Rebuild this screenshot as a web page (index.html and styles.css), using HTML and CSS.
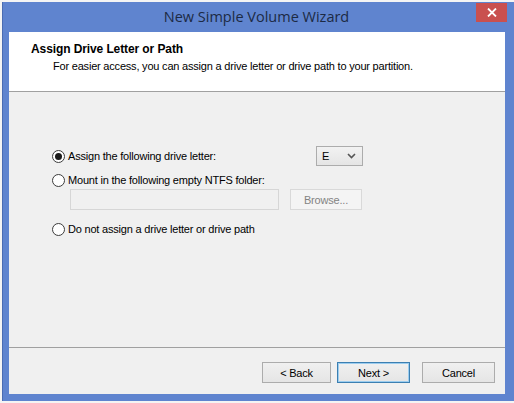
FILE: index.html
```html
<!DOCTYPE html>
<html lang="en">

<head>
    <meta charset="UTF-8">
    <title>New Simple Volume Wizard</title>
    <link rel="stylesheet" href="styles.css">
</head>

<body>
    <div class="desktop">
        <div class="window">
            <div class="titlebar">
                <span class="title">New Simple Volume Wizard</span>
                <button class="close" type="button">
                    <svg width="10" height="9" viewBox="0 0 10 9">
                        <path d="M1 0.5 L9 8.5 M9 0.5 L1 8.5" stroke="#fff" stroke-width="1.8" fill="none"/>
                    </svg>
                </button>
            </div>
            <div class="client">
                <div class="header">
                    <div class="head-title">Assign Drive Letter or Path</div>
                    <div class="head-sub">For easier access, you can assign a drive letter or drive path to your partition.</div>
                </div>
                <div class="content">
                    <div class="row row-first">
                        <label class="option">
                            <span class="radio checked"></span>
                            Assign the following drive letter:
                        </label>
                        <div class="select">
                            <span>E</span>
                            <svg width="9" height="6" viewBox="0 0 9 6">
                                <path d="M1 1 L4.5 4.5 L8 1" stroke="#555" stroke-width="1.6" fill="none"/>
                            </svg>
                        </div>
                    </div>
                    <div class="row">
                        <label class="option">
                            <span class="radio"></span>
                            Mount in the following empty NTFS folder:
                        </label>
                    </div>
                    <div class="folder">
                        <div class="textbox"></div>
                        <button class="btn disabled" type="button">Browse...</button>
                    </div>
                    <div class="row row-last">
                        <label class="option">
                            <span class="radio"></span>
                            Do not assign a drive letter or drive path
                        </label>
                    </div>
                </div>
                <div class="footer">
                    <button class="btn back" type="button">&lt; Back</button>
                    <button class="btn default" type="button">Next &gt;</button>
                    <button class="btn cancel" type="button">Cancel</button>
                </div>
            </div>
        </div>
    </div>
</body>

</html>
```

FILE: styles.css
```css
body {
    margin: 0;
    background: #f4f4f4;
    font-family: "Liberation Sans", Arial, sans-serif;
    font-size: 11px;
    letter-spacing: -0.2px;
    color: #000;
}

.desktop {
    width: 514px;
    height: 403px;
    padding: 2px 0 0 2px;
    box-sizing: border-box;
    overflow: hidden;
}

.window {
    width: 514px;
    height: 399px;
    background: #5f84cf;
    border-left: 1px solid #4a6cb3;
    box-sizing: border-box;
    display: flex;
    flex-direction: column;
}

.titlebar {
    height: 30px;
    position: relative;
    display: flex;
    align-items: center;
    justify-content: center;
}

.title {
    font-family: "Open Sans", "Noto Sans", sans-serif;
    font-size: 14.5px;
    letter-spacing: 0;
    color: #1c2a44;
    margin: -1px 6px 0 0;
}

.close {
    position: absolute;
    top: 1px;
    right: 9px;
    width: 31px;
    height: 19px;
    border: none;
    background: #c9504f;
    padding: 0;
    display: flex;
    align-items: center;
    justify-content: center;
}

.client {
    margin: 0 11px 7px 6px;
    flex: 1;
    background: #f0f0f0;
    display: flex;
    flex-direction: column;
}

.header {
    height: 59px;
    background: #fff;
    border-bottom: 1px solid #a0a0a0;
    box-sizing: content-box;
    padding-left: 22px;
}

.head-title {
    font-weight: bold;
    font-size: 12px;
    letter-spacing: -0.1px;
    margin-top: 10px;
}

.head-sub {
    margin-top: 4px;
    padding-left: 22px;
}

.content {
    flex: 1;
    padding: 54px 0 0 43px;
    border-bottom: 1px solid #a0a0a0;
}

.row {
    display: flex;
    align-items: center;
    height: 16px;
}

.row-first {
    height: 20px;
    margin-bottom: 6px;
}

.row-last {
    margin-top: 11px;
}

.option {
    display: flex;
    align-items: center;
    gap: 3px;
    width: 264px;
}

.radio {
    width: 13px;
    height: 13px;
    box-sizing: border-box;
    border: 1px solid #3c3c3c;
    border-radius: 50%;
    background: #fff;
    position: relative;
}

.radio.checked::after {
    content: "";
    position: absolute;
    left: 2px;
    top: 2px;
    width: 7px;
    height: 7px;
    border-radius: 50%;
    background: #1a1a1a;
}

.select {
    width: 47px;
    height: 20px;
    box-sizing: border-box;
    border: 1px solid #acacac;
    background: linear-gradient(#f2f2f2, #e5e5e5);
    display: flex;
    align-items: center;
    justify-content: space-between;
    padding: 0 6px 0 5px;
}

.folder {
    display: flex;
    gap: 11px;
    margin: 1px 0 0 18px;
}

.textbox {
    width: 209px;
    height: 21px;
    box-sizing: border-box;
    border: 1px solid #d6d6d6;
    background: #f0f0f0;
}

.btn {
    width: 73px;
    height: 21px;
    box-sizing: border-box;
    border: 1px solid #acacac;
    background: linear-gradient(#f0f0f0, #e5e5e5);
    font-family: "Liberation Sans", Arial, sans-serif;
    font-size: 11px;
    letter-spacing: -0.2px;
    color: #000;
    padding: 0;
}

.btn.disabled {
    width: 72px;
    background: #f4f4f4;
    border-color: #d9d9d9;
    color: #838383;
}

.btn.back {
    width: 69px;
}

.btn.default {
    border-color: #3c7fb1;
    box-shadow: inset 0 0 0 1px #9ccdef;
}

.footer {
    height: 46px;
    display: flex;
    align-items: flex-start;
    justify-content: flex-end;
    padding: 14px 10px 0 0;
    box-sizing: border-box;
}

.footer .default {
    margin-left: 6px;
}

.footer .cancel {
    margin-left: 12px;
}
```
